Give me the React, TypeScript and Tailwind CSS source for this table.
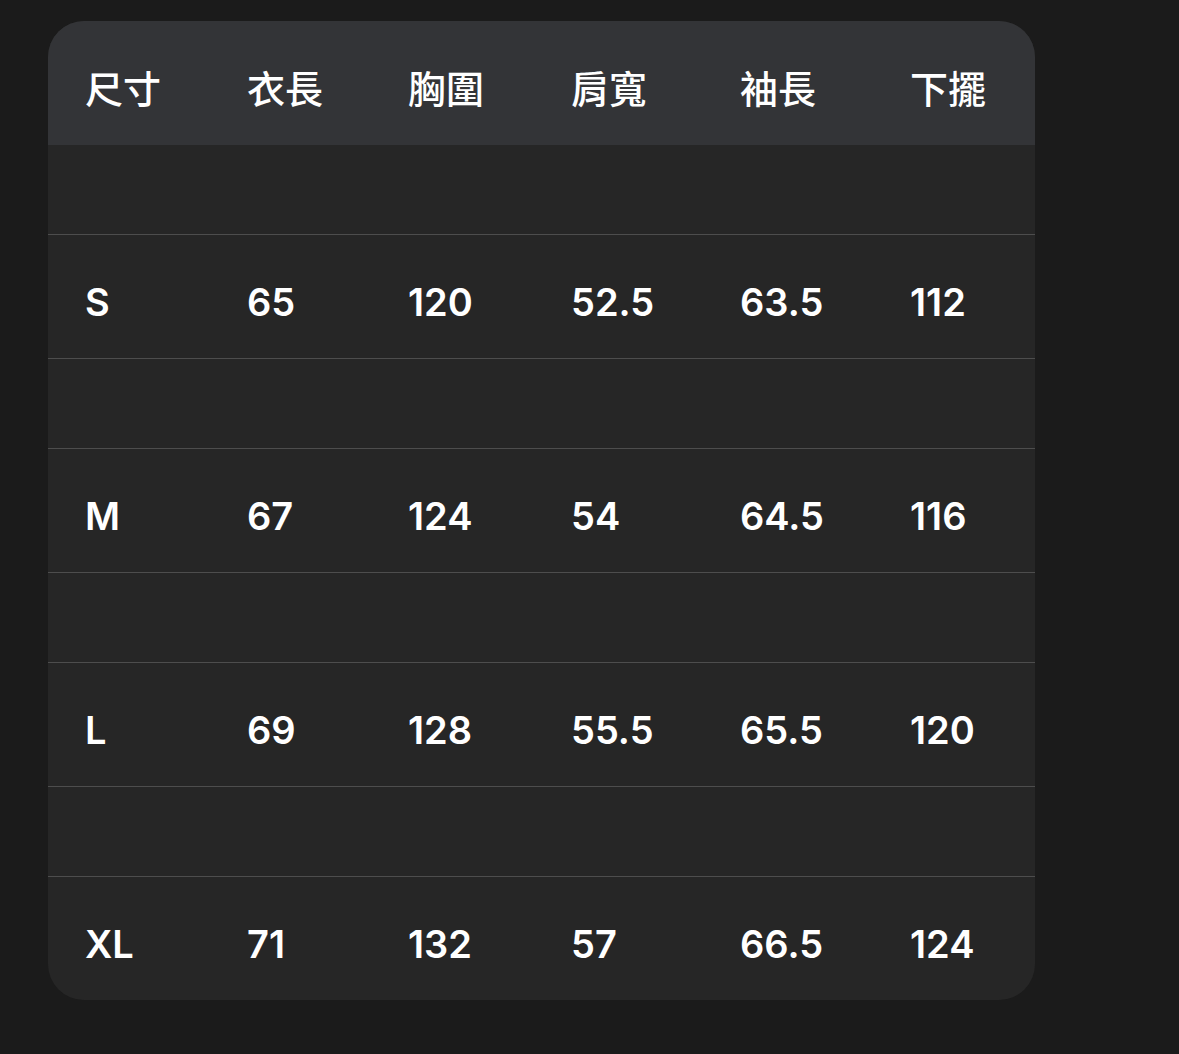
const headers = ["尺寸", "衣長", "胸圍", "肩寬", "袖長", "下擺"];

const rows = [
  ["S", "65", "120", "52.5", "63.5", "112"],
  ["M", "67", "124", "54", "64.5", "116"],
  ["L", "69", "128", "55.5", "65.5", "120"],
  ["XL", "71", "132", "57", "66.5", "124"],
];

const font = { fontFamily: "Inter, 'Noto Sans CJK TC', sans-serif" };

const gridCols = "grid grid-cols-[162px_161px_163px_169px_170px_1fr] pl-[37px] items-center";

const App = () => {
  return <div className="min-h-screen w-full bg-[#1b1b1b] pt-[21px] pl-[48px]" style={font}>
      <div className="w-[987px] rounded-[36px] overflow-hidden bg-[#262626] text-white">
        {/* header */}
        <div className={`${gridCols} h-[124px] bg-[#333437] pt-[12px]`}>
          {headers.map(h => <div key={h} className="text-[38px] font-medium leading-none">
              {h}
            </div>)}
        </div>

        {rows.map((row, i) => <div key={row[0]}>
            <div className="h-[90px] border-b border-[#4d4d4d]" />
            <div className={`${gridCols} pt-[10px] ${i < rows.length - 1 ? "border-b border-[#4d4d4d] h-[124px]" : "h-[123px]"}`}>
              {row.map((c, j) => <div key={j} className="text-[38px] font-semibold leading-none">
                  {c}
                </div>)}
            </div>
          </div>)}
      </div>
    </div>;
};

export default App;
